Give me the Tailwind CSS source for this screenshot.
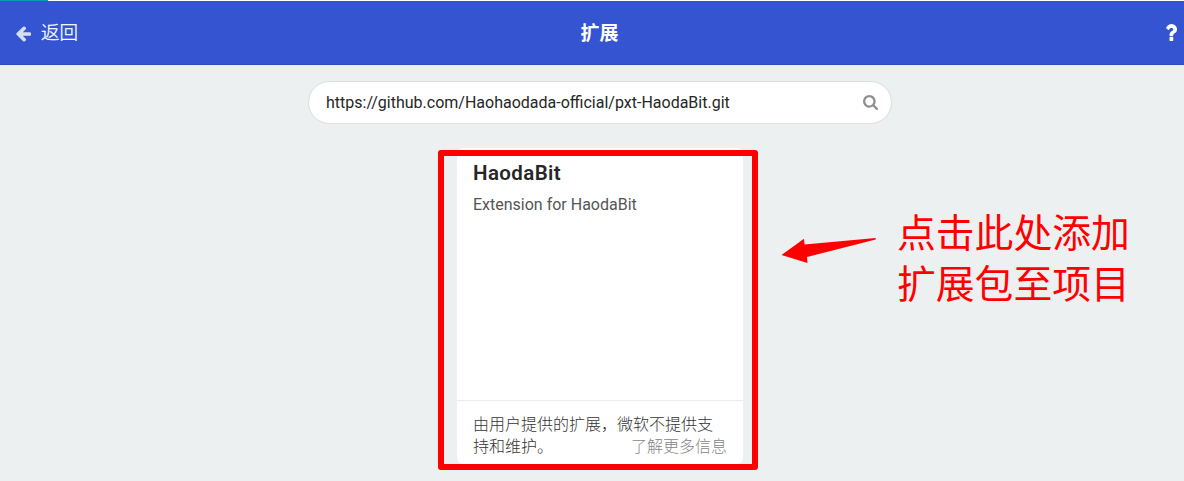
<!DOCTYPE html>
<html lang="zh-CN">
<head>
<meta charset="utf-8">
<title>扩展</title>
<script src="https://cdn.jsdelivr.net/npm/@tailwindcss/browser@4"></script>
</head>
<body class="relative h-[481px] w-[1184px] overflow-hidden bg-[#ecf0f1] font-[Roboto,'Noto_Sans_CJK_SC',sans-serif]">
  <div class="h-px bg-white"><div class="h-px w-12 bg-[#0a9bb8]"></div></div>
  <header class="grid h-16 grid-cols-3 items-center border-b border-[#2e4bc0] bg-[#3454d1] text-white">
    <a class="flex items-center pl-[15px]">
      <svg class="mt-0.5 h-4 w-4 fill-white/80" viewBox="64 130 1600 1660" preserveAspectRatio="none"><path d="M1664 896v128q0 53-32.5 90.5t-84.5 37.5h-704l293 294q38 36 38 90t-38 90l-75 76q-37 37-90 37-52 0-91-37l-651-652q-37-37-37-90 0-52 37-91l651-650q38-38 91-38 52 0 90 38l75 74q38 38 38 91t-38 91l-293 293h704q52 0 84.5 37.5t32.5 90.5z"/></svg>
      <span class="ml-2.5 text-[18.5px] leading-6 font-light [-webkit-text-stroke:0.3px_white]">返回</span>
    </a>
    <h1 class="pt-0.5 pl-[15px] text-center text-[19px] leading-6 font-bold">扩展</h1>
    <div class="flex justify-end pr-[7px]">
      <svg class="h-[17px] w-3 fill-white" viewBox="384 256 1020 1280" preserveAspectRatio="none"><path d="M1088 1256v240q0 16-12 28t-28 12h-240q-16 0-28-12t-12-28v-240q0-16 12-28t28-12h240q16 0 28 12t12 28zm316-600q0 54-15.5 101t-35 76.5-55 59.5-57.5 43.5-61 35.5q-41 23-68.5 65t-27.5 67q0 17-12 32.5t-28 15.5h-240q-15 0-25.5-18.5t-10.5-37.5v-45q0-83 65-156.5t143-108.5q59-27 84-56t25-76q0-42-46.5-74t-107.5-32q-65 0-108 29-35 25-107 115-13 16-31 16-12 0-25-8l-164-125q-13-10-15.5-25t5.5-28q160-266 464-266 80 0 161 31t146 83 106 127.5 41 158.5z"/></svg>
    </div>
  </header>
  <main class="flex flex-col items-center pl-4">
    <div class="mt-4 flex h-[43px] w-[584px] items-center justify-between rounded-full border border-[#dcdddd] bg-white pr-[13px] pl-[17px]">
      <span class="text-base text-[#262626]">https://github.com/Haohaodada-official/pxt-HaodaBit.git</span>
      <svg class="h-[15px] w-[15px] fill-[#8f8f8f]" viewBox="64 128 1664 1664"><path d="M1216 832q0-185-131.5-316.5t-316.5-131.5-316.5 131.5-131.5 316.5 131.5 316.5 316.5 131.5 316.5-131.5 131.5-316.5zm512 832q0 52-38 90t-90 38q-54 0-90-38l-343-342q-179 124-399 124-143 0-273.5-55.5t-225-150-150-225-55.5-273.5 55.5-273.5 150-225 225-150 273.5-55.5 273.5 55.5 225 150 150 225 55.5 273.5q0 220-124 399l343 343q37 37 37 90z"/></svg>
    </div>
    <article class="mt-6 flex h-[316px] w-[286px] flex-col rounded-md bg-white">
      <div class="flex-1 px-4 pt-3">
        <h2 class="text-[20.5px] leading-[26px] font-semibold tracking-[0.4px] text-[#262626]">HaodaBit</h2>
        <p class="mt-2 text-base leading-[22px] text-[#555]">Extension for HaodaBit</p>
      </div>
      <div class="h-16 border-t border-[#ececec] px-4 pt-[13px] text-base leading-[22px] font-light text-[#333]">
        <p>由用户提供的扩展，微软不提供支</p>
        <p class="flex justify-between"><span>持和维护。</span><a class="text-[#858585]">了解更多信息</a></p>
      </div>
    </article>
  </main>
  <div class="absolute top-[150px] left-[438px] h-[320px] w-[320px] rounded-[3px] border-6 border-[#ff0000]"></div>
  <svg class="absolute top-[230px] left-[780px] h-10 w-[100px] fill-[#ff0000]" viewBox="780 230 100 40"><path d="M781.5 255 804 238.800 804.500 244.500 875.700 238 875.700 239.500 807 257 807.500 263z"/></svg>
  <p class="absolute top-[208px] left-[897px] text-[38.8px] leading-[51px] whitespace-nowrap text-[#ff0000]">点击此处添加<br>扩展包至项目</p>
</body>
</html>
